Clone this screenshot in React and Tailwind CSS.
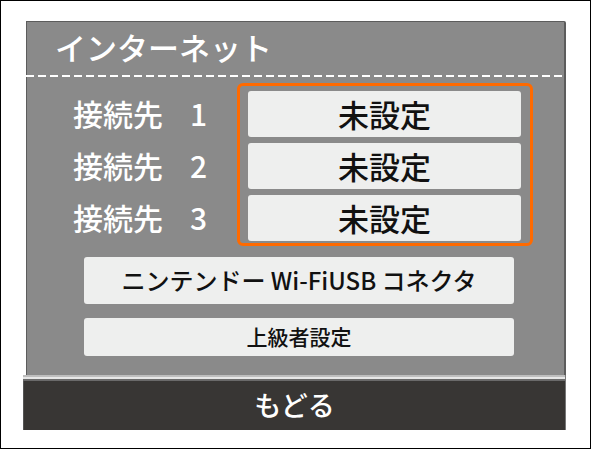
import React from 'react';

const jp = { fontFamily: '"Noto Sans CJK JP", "Noto Sans", sans-serif' };

function SlotButton({ label }) {
  return (
    <div className="h-[46px] rounded-[3px] bg-[#eeefee] flex items-center justify-center text-[31px] text-[#111] leading-none pb-[2px]">
      {label}
    </div>
  );
}

function RowLabel({ n }) {
  return (
    <div className="h-[46px] flex items-center text-[30px] text-white leading-none pb-[2px]">
      <span>接続先</span>
      <span className="ml-[27px]">{n}</span>
    </div>
  );
}

export default function App() {
  const slots = [1, 2, 3];
  return (
    <div className="w-[591px] h-[449px] bg-white border border-black pt-[20px] pl-[22px] font-medium" style={jp}>
      <div className="w-[543px]">
        {/* main panel */}
        <div className="ml-[3px] w-[540px] h-[354px] bg-[#8a8a8a] border-t border-l border-r-2 border-[#5c5c5c] rounded-tr-[2px]">
          <div className="h-[53px] pl-[28px] pt-[9px] text-[31px] leading-none text-white">インターネット</div>
          <div className="h-[2px] -ml-px w-[540px] bg-[repeating-linear-gradient(90deg,#ffffff_0px,#ffffff_8px,transparent_8px,transparent_12px)]"></div>

          <div className="flex mt-[6px]">
            <div className="flex flex-col gap-[6px] pl-[46px] pt-[8px] w-[210px]">
              {slots.map((n) => (
                <RowLabel key={n} n={n} />
              ))}
            </div>
            <div className="w-[296px] h-[163px] border-[3px] border-[#ff6a00] rounded-[6px] pt-[5px] pl-[8px] pr-[9px] flex flex-col gap-[6px]">
              {slots.map((n) => (
                <SlotButton key={n} label="未設定" />
              ))}
            </div>
          </div>

          <div className="mt-[11px] ml-[57px] w-[430px] flex flex-col gap-[14px]">
            <div className="h-[47px] rounded-[3px] bg-[#eeefee] flex items-center justify-center text-[24px] text-[#111] leading-none pb-[2px]">
              ニンテンドー Wi-FiUSB コネクタ
            </div>
            <div className="h-[38px] rounded-[3px] bg-[#eeefee] flex items-center justify-center text-[21px] text-[#111] leading-none pb-[2px]">
              上級者設定
            </div>
          </div>
        </div>

        {/* back bar */}
        <div className="w-[543px] h-[55px] border-r border-[#777]">
          <div className="h-[2px] bg-[#bdbdbd]"></div>
          <div className="h-[2px] bg-[#e6e6e6]"></div>
          <div className="h-[2px] bg-[#6a6a6a]"></div>
          <div className="h-[49px] bg-[#383634] border-l border-[#555] flex items-center justify-center text-[27px] text-white leading-none pb-[2px]">
            もどる
          </div>
        </div>
      </div>
    </div>
  );
}
